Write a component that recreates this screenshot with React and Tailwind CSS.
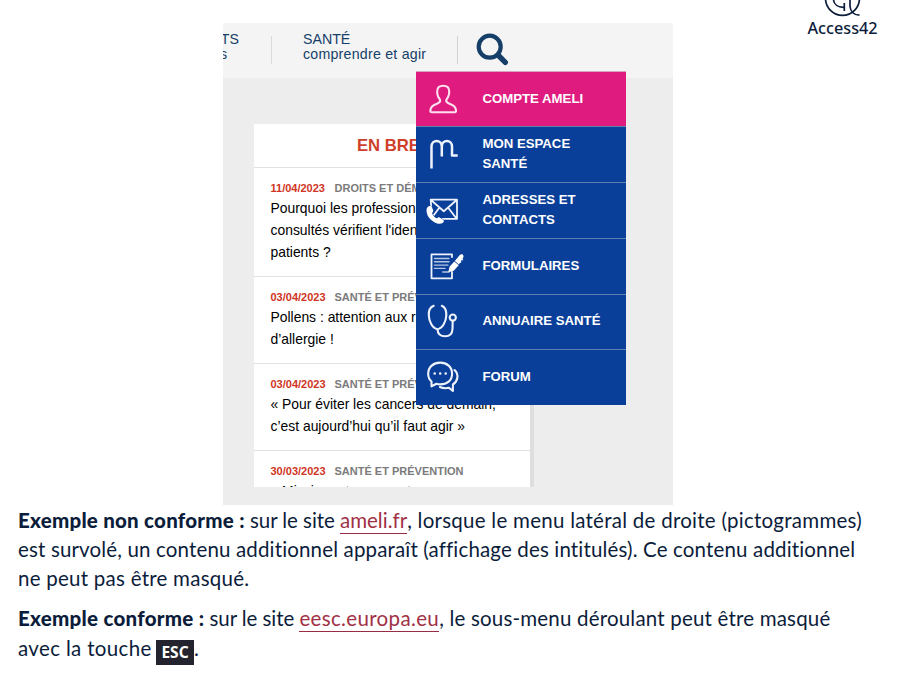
function Icon({ children }) {
  return (
    <svg
      viewBox="0 0 40 40"
      className="-mt-px ml-2 mr-[19px] h-10 w-10 shrink-0 overflow-visible"
      fill="none"
      stroke="#eef2fa"
      strokeWidth="2.1"
      strokeLinecap="round"
      strokeLinejoin="round"
    >
      {children}
    </svg>
  );
}

const menu = [
  {
    lines: ["COMPTE AMELI"],
    icon: (
      <path
        stroke="#fde0ee"
        d="M7.6 33.3c-1 0-1.3-.7-1.2-2 .3-3.3 2.2-5 5.3-6.1 2.3-.8 4.5-1.3 4.5-3.4 0-1.7-1.3-2.4-2.1-4.3-.9-2-1-3.6-.9-5.3.1-3.6 2.5-5.4 6-5.4s5.900 1.800 6 5.400c.1 1.700 0 3.300-.9 5.300-.8 1.900-2.100 2.600-2.100 4.300 0 2.100 2.200 2.600 4.500 3.400 3.100 1.100 5 2.800 5.300 6.100.1 1.300-.2 2-1.200 2z"
      />
    ),
  },
  {
    lines: ["MON ESPACE", "SANTÉ"],
    icon: <path strokeWidth="2.5" strokeLinecap="butt" d="M7.500 34.500V12.500c0-7.500 10.300-7.500 10.300 0V22.500M17.800 12.500c0-7.500 10.200-7.500 10.200 0V21.500h5.700" />,
  },
  {
    lines: ["ADRESSES ET", "CONTACTS"],
    icon: (
      <>
        <path strokeWidth="1.8" d="M6.700 9.700H33v19.100H8zM7 10l12.800 11.200L32.700 10M24 17.500l8.500 11M15.500 17.500L8 27.500" />
        <path
          d="M3.500 16.500c1.500-1 3-.4 3.800 1.300l1 2.300c.5 1.300-.2 2-1.200 2.900.8 2.500 2.500 4.300 5 5.400 1-.9 1.800-1.400 3-.7l2.500 1.500c2 1.200 1.800 2.500.5 3.600-2 1.600-5 1.300-8.500-.6C4.500 29.300 1.800 25 1.700 20.500c0-1.800.5-3.100 1.800-4z"
          transform="translate(.8 0)"
          fill="#fff"
          stroke="#0a3f99"
          strokeWidth="1"
          paintOrder="stroke"
        />
      </>
    ),
  },
  {
    lines: ["FORMULAIRES"],
    icon: (
      <>
        <path strokeWidth="1.8" d="M28 11V8.300H7.500V32.300H28V26" />
        <path strokeWidth="1.400" stroke="#b5c5e2" d="M10.500 12.500H25M10.500 15.800H25M10.500 19.100H24M10.500 22.400H21M18.700 26H25" />
        <path d="M24.300 26.200l1.200-5.500 4.800-5.200 4.400 3.800-5 5.500zM30.800 15l5-6c.8-1 3-1 3.500.4.400.9.2 1.700-.4 2.500l-4 6.600z" fill="#fff" stroke="none" />
        <path d="M36 16.500l3.200-4.500" strokeWidth="1.800" strokeDasharray="1.500 1.500" strokeLinecap="butt" />
      </>
    ),
  },
  {
    lines: ["ANNUAIRE SANTÉ"],
    icon: (
      <>
        <path d="M9.700 4.800C5.500 6.500 4.500 10 4.800 14.500c.3 6 3.500 13 8.700 13.700 5.200-.7 8.500-7.700 8.800-13.700.2-4.500-.6-8-4.500-9.700M13.500 28.200c.2 4.800 3.500 7.100 7.600 7.100 4.700 0 7.200-2.700 7.400-7.300l.2-8.200" />
        <circle cx="28.800" cy="16.600" r="3.100" />
      </>
    ),
  },
  {
    lines: ["FORUM"],
    icon: (
      <>
        <path d="M7.500 29.300V24.500C5.200 22.500 4.200 20 4.200 16.800 4.200 10 9.500 5.600 16.200 5.600s11.900 4.400 11.900 11.200-5.200 10.600-11.900 10.600c-1.400 0-2.600-.2-3.700-.6z" />
        <path d="M30.500 13c2.700 2.300 3.300 4.700 2.800 8-.4 2.800-1.900 4.900-4.400 6.500V34l-4-3.200c-3.700.8-6.500.4-9-.8" />
        <path strokeWidth="2.600" d="M10.700 16.500h.01M16.200 16.500h.01M21.700 16.500h.01" />
      </>
    ),
  },
];

const news = [
  {
    date: "11/04/2023",
    tag: "DROITS ET DÉMARCHES",
    lines: ["Pourquoi les professionnels de santé", "consultés vérifient l'identité de leurs", "patients ?"],
  },
  {
    date: "03/04/2023",
    tag: "SANTÉ ET PRÉVENTION",
    lines: ["Pollens : attention aux risques", "d’allergie !"],
  },
  {
    date: "03/04/2023",
    tag: "SANTÉ ET PRÉVENTION",
    lines: ["« Pour éviter les cancers de demain,", "c’est aujourd’hui qu’il faut agir »"],
  },
  {
    date: "30/03/2023",
    tag: "SANTÉ ET PRÉVENTION",
    lines: ["« Mission retrouver votre"],
  },
];

function Link({ children, className = "" }) {
  return (
    <a href="#" className={`border-b border-[#982c42] pb-px text-[#a13045] ${className}`}>
      {children}
    </a>
  );
}

export default function App() {
  return (
    <main className="h-[693px] w-[897px] overflow-hidden bg-white font-['Lato',sans-serif] text-[#0c1d3b]">
      <div className="flex h-[505px] items-start pl-[223px]">
        <figure className="relative mt-[23px] h-[482px] w-[450px] overflow-hidden bg-[#ededed] font-['Liberation_Sans',sans-serif]">
          <div className="flex h-[55px] bg-[#f4f4f4] text-[14.2px] leading-[15px] text-[#153f68]">
            <div className="flex w-4 flex-col pt-[9px]">
              <span className="self-end">TS</span>
              <span className="-ml-[3px]">s</span>
            </div>
            <div className="ml-8 mt-[13px] h-7 w-px bg-[#dadada]" />
            <div className="ml-[31px] flex w-[154px] flex-col whitespace-nowrap pt-[9px]">
              <span>SANTÉ</span>
              <span className="tracking-[0.23px]">comprendre et agir</span>
            </div>
            <div className="mt-[13px] h-7 w-px bg-[#d2d2d2]" />
            <svg viewBox="0 0 34 34" className="ml-[18px] mt-[9px] h-[34px] w-[34px]" fill="none" stroke="#153f68" strokeLinecap="round">
              <circle cx="13.700" cy="14.700" r="11" strokeWidth="4.200" />
              <path d="M22.500 23.500L29.300 30.300" strokeWidth="5.400" />
            </svg>
          </div>

          <div className="ml-[31px] mt-[46px] h-[363px] w-[280px] overflow-hidden border-r-4 border-[#dedede] bg-white">
            <h2 className="flex h-[43px] items-center justify-center pl-[3px] text-[16.7px] font-bold text-[#cf3f2c]">EN BREF</h2>
            {news.map((item, i) => (
              <article key={i} className="whitespace-nowrap border-t border-[#e2e2e2] pb-[13px] pl-[16.500px] pt-3 text-[13.900px] leading-[22px] text-black">
                <div className="mb-px flex gap-[9px] text-[11px] font-bold leading-4">
                  <span className="w-[55px] text-[#cf3524]">{item.date}</span>
                  <span className="text-[#7b7b7b]">{item.tag}</span>
                </div>
                {item.lines.map((line) => (
                  <p key={line}>{line}</p>
                ))}
              </article>
            ))}
          </div>

          <nav className="absolute left-[192.500px] top-[48px] w-[210.500px] border-t border-[#d9a3bf] bg-[#0a3f99] text-[13.200px] font-bold leading-5 text-white">
            {menu.map((item, i) => (
              <div
                key={item.lines[0]}
                className={`flex items-center ${i === 0 ? "h-[54.250px] bg-[#e01b80]" : "h-[55.750px] border-t border-[#5f80b3]"}`}
              >
                <Icon>{item.icon}</Icon>
                <div className="-mt-px whitespace-nowrap">
                  {item.lines.map((line) => (
                    <div key={line}>{line}</div>
                  ))}
                </div>
              </div>
            ))}
          </nav>
        </figure>

        <div className="ml-auto mr-[18px] flex w-[73px] flex-col items-center">
          <svg viewBox="0 0 40 18" className="h-[18px] w-10" fill="none" stroke="#0c1d3b" strokeWidth="1.700">
            <circle cx="19.500" cy="-1.700" r="17" />
            <path d="M10.500 0c.5 4.500 4.500 7.500 10.500 7.300M21.300 3v8M27 0v6.500c.5 5 4 8.700 9.500 8.700" />
          </svg>
          <span className="font-['Noto_Sans',sans-serif] text-[16.200px] font-medium leading-5">Access42</span>
        </div>
      </div>

      <section className="whitespace-nowrap pl-[18px] pt-px text-[20.500px] leading-[29px]">
        <p>
          <strong className="font-black tracking-[0.240px]">Exemple non conforme :</strong>
          <span className="tracking-[-0.050px]"> sur le site </span>
          <Link>ameli.fr</Link>
          <span className="tracking-[0.260px]">, lorsque le menu latéral de droite (pictogrammes)</span>
          <br />
          <span className="tracking-[0.150px]">est survolé, un contenu additionnel apparaît (affichage des intitulés). Ce contenu additionnel</span>
          <br />
          <span className="tracking-[0.250px]">ne peut pas être masqué.</span>
        </p>
        <p className="mt-[11px]">
          <strong className="font-black tracking-[0.270px]">Exemple conforme :</strong>
          <span className="tracking-[-0.070px]"> sur le site </span>
          <Link className="tracking-[0.350px]">eesc.europa.eu</Link>
          <span className="tracking-[0.190px]">, le sous-menu déroulant peut être masqué</span>
        </p>
        <p className="mt-px flex">
          <span className="w-[138px] tracking-[0.350px]">avec la touche</span>
          <kbd className="mt-1.5 flex h-[25px] w-[38px] items-center justify-center bg-[#24242e] font-['Noto_Sans',sans-serif] text-[15.500px] font-bold text-white">
            ESC
          </kbd>
          <span>.</span>
        </p>
      </section>
    </main>
  );
}
